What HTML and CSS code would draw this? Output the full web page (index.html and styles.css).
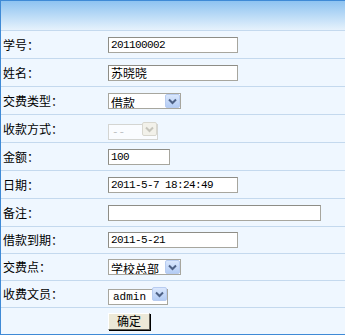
FILE: index.html
```html
<!DOCTYPE html>
<html lang="zh-CN">
<head>
  <meta charset="UTF-8">
  <title>交费</title>
  <link rel="stylesheet" href="styles.css">
</head>
<body>

  <div class="panel">
    <div class="head"></div>
    <form id="payForm">
      <div class="row">
        <label for="stuNo">学号：</label>
        <div class="field"><input type="text" id="stuNo" class="w130" value="201100002"></div>
      </div>
      <div class="row">
        <label for="stuName">姓名：</label>
        <div class="field"><input type="text" id="stuName" class="w130 cjk" value="苏晓晓"></div>
      </div>
      <div class="row">
        <label for="payType">交费类型：</label>
        <div class="field">
          <span class="sel w73">
            <select id="payType" class="cjk"><option>借款</option><option>交费</option></select>
            <svg class="arrow" width="15" height="14" viewBox="0 0 15 14">
              <defs>
                <linearGradient id="btnBlue" x1="0" y1="0" x2="0" y2="1">
                  <stop offset="0" stop-color="#dbe8fd"/>
                  <stop offset="1" stop-color="#b2cbf4"/>
                </linearGradient>
              </defs>
              <rect x="0.5" y="0.5" width="14" height="13" rx="1.5" fill="url(#btnBlue)" stroke="#b8ccf0"/>
              <path d="M4 5.5 L7.5 9 L11 5.5" fill="none" stroke="#4d6185" stroke-width="2"/>
            </svg>
          </span>
        </div>
      </div>
      <div class="row">
        <label for="payWay">收款方式：</label>
        <div class="field">
          <span class="sel w50 off">
            <select id="payWay" disabled><option>--</option></select>
            <svg class="arrow" width="15" height="14" viewBox="0 0 15 14">
              <rect x="0.5" y="0.5" width="14" height="13" rx="1.5" fill="#f2f1ea" stroke="#d8d7cf"/>
              <path d="M4 5.5 L7.5 9 L11 5.5" fill="none" stroke="#c6c5bc" stroke-width="2"/>
            </svg>
          </span>
        </div>
      </div>
      <div class="row">
        <label for="amount">金额：</label>
        <div class="field"><input type="text" id="amount" class="w62" value="100"></div>
      </div>
      <div class="row">
        <label for="payDate">日期：</label>
        <div class="field"><input type="text" id="payDate" class="w130" value="2011-5-7 18:24:49"></div>
      </div>
      <div class="row">
        <label for="remark">备注：</label>
        <div class="field"><input type="text" id="remark" class="w213" value=""></div>
      </div>
      <div class="row short">
        <label for="dueDate">借款到期：</label>
        <div class="field"><input type="text" id="dueDate" class="w130" value="2011-5-21"></div>
      </div>
      <div class="row short">
        <label for="payPoint">交费点：</label>
        <div class="field">
          <span class="sel w73">
            <select id="payPoint" class="cjk"><option>学校总部</option></select>
            <svg class="arrow" width="15" height="14" viewBox="0 0 15 14">
              <rect x="0.5" y="0.5" width="14" height="13" rx="1.5" fill="url(#btnBlue)" stroke="#b8ccf0"/>
              <path d="M4 5.5 L7.5 9 L11 5.5" fill="none" stroke="#4d6185" stroke-width="2"/>
            </svg>
          </span>
        </div>
      </div>
      <div class="row short">
        <label for="clerk">收费文员：</label>
        <div class="field">
          <span class="sel w60">
            <select id="clerk" class="mono"><option>admin</option></select>
            <svg class="arrow" width="15" height="14" viewBox="0 0 15 14">
              <rect x="0.5" y="0.5" width="14" height="13" rx="1.5" fill="url(#btnBlue)" stroke="#b8ccf0"/>
              <path d="M4 5.5 L7.5 9 L11 5.5" fill="none" stroke="#4d6185" stroke-width="2"/>
            </svg>
          </span>
        </div>
      </div>
      <div class="row last">
        <span></span>
        <div class="field"><input type="submit" class="btn" value="确定"></div>
      </div>
    </form>
  </div>

</body>
</html>
```

FILE: styles.css
```css
body {
  margin: 0;
  font-family: "Noto Sans CJK SC", sans-serif;
  font-size: 12px;
  color: #000;
  background: #fff;
}
.panel {
  width: 344px;
  border: 1px solid #3f8ad6;
  border-right: none;
  background-color: #eff7ff;
}
.head {
  height: 29px;
  background: linear-gradient(#8ec3f1, #e6f2fc);
  border-bottom: 1px solid #c4d9ee;
}
.row {
  display: grid;
  grid-template-columns: 107px 1fr;
  align-items: center;
  height: 27px;
  border-bottom: 1px solid #c4d9ee;
}
.row.short {
  height: 26px;
}
.row.last {
  height: 26px;
  border-bottom: none;
}
.row label {
  padding-left: 2px;
  line-height: 14px;
  white-space: nowrap;
}
.field {
  display: flex;
  align-items: center;
}
input[type="text"] {
  box-sizing: border-box;
  height: 16px;
  margin: 0;
  padding: 0 2px;
  border: 1px solid #a7a69e;
  border-top-color: #8e8d86;
  border-left-color: #8e8d86;
  background: #fff;
  font-family: "Liberation Mono", monospace;
  font-size: 11px;
  letter-spacing: -0.6px;
  color: #000;
  outline: none;
}
input.cjk {
  font-family: "Noto Sans CJK SC", sans-serif;
  font-size: 12px;
  letter-spacing: 0;
  line-height: 14px;
}
.w130 { width: 130px; }
.w62 { width: 62px; }
.w213 { width: 213px; }
.w73 { width: 73px; }
.w60 { width: 60px; }
.w50 { width: 50px; }
.sel {
  position: relative;
  display: inline-block;
  height: 16px;
}
.sel select {
  -webkit-appearance: none;
  appearance: none;
  box-sizing: border-box;
  width: 100%;
  height: 16px;
  margin: 0;
  padding: 0 0 0 3px;
  border: 1px solid #a7a69e;
  border-radius: 0;
  background: #fff;
  font-family: "Liberation Mono", monospace;
  font-size: 11px;
  color: #000;
  outline: none;
}
.sel select.cjk {
  font-family: "Noto Sans CJK SC", sans-serif;
  font-size: 12px;
  padding-left: 2px;
}
.sel select.mono {
  font-family: "Liberation Mono", monospace;
  font-size: 11px;
  padding-left: 4px;
}
.sel.off select {
  border-color: #c9c8c0;
  color: #a8a8a8;
  background: #fff;
}
.arrow {
  position: absolute;
  right: 1px;
  top: 1px;
  pointer-events: none;
}
.btn {
  box-sizing: border-box;
  width: 42px;
  height: 17px;
  margin: 0;
  padding: 0;
  border: 1px solid;
  border-color: #fff #5e5c53 #5e5c53 #fff;
  box-shadow: 1px 1px 0 #000;
  background-color: #ece9d8;
  font-family: "Noto Sans CJK SC", sans-serif;
  font-size: 12px;
  line-height: 14px;
  color: #000;
  cursor: pointer;
}
```
